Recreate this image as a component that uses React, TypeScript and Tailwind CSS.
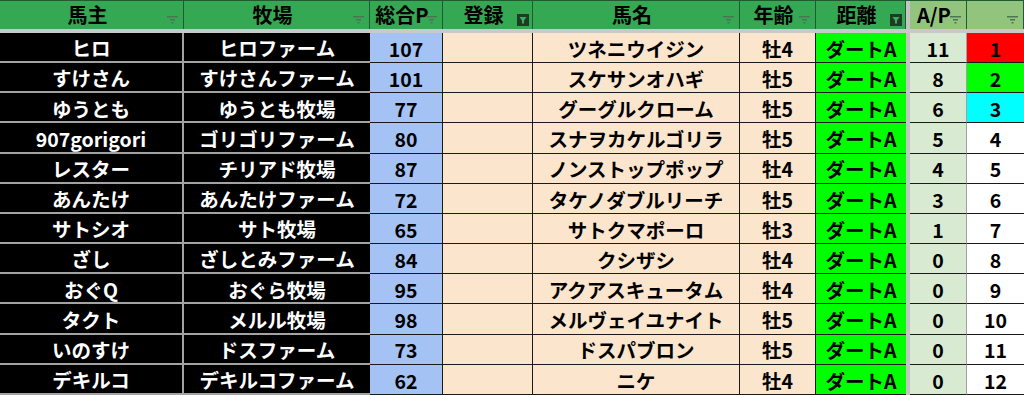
import React from 'react';

type Row = {
  owner: string;
  farm: string;
  total: number;
  horse: string;
  age: string;
  ap: number;
  rank: number;
};

const rows: Row[] = [
  { owner: 'ヒロ', farm: 'ヒロファーム', total: 107, horse: 'ツネニウイジン', age: '牡4', ap: 11, rank: 1 },
  { owner: 'すけさん', farm: 'すけさんファーム', total: 101, horse: 'スケサンオハギ', age: '牡5', ap: 8, rank: 2 },
  { owner: 'ゆうとも', farm: 'ゆうとも牧場', total: 77, horse: 'グーグルクローム', age: '牡5', ap: 6, rank: 3 },
  { owner: '907gorigori', farm: 'ゴリゴリファーム', total: 80, horse: 'スナヲカケルゴリラ', age: '牡5', ap: 5, rank: 4 },
  { owner: 'レスター', farm: 'チリアド牧場', total: 87, horse: 'ノンストップポップ', age: '牡4', ap: 4, rank: 5 },
  { owner: 'あんたけ', farm: 'あんたけファーム', total: 72, horse: 'タケノダブルリーチ', age: '牡5', ap: 3, rank: 6 },
  { owner: 'サトシオ', farm: 'サト牧場', total: 65, horse: 'サトクマポーロ', age: '牡3', ap: 1, rank: 7 },
  { owner: 'ざし', farm: 'ざしとみファーム', total: 84, horse: 'クシザシ', age: '牡4', ap: 0, rank: 8 },
  { owner: 'おぐQ', farm: 'おぐら牧場', total: 95, horse: 'アクアスキュータム', age: '牡4', ap: 0, rank: 9 },
  { owner: 'タクト', farm: 'メルル牧場', total: 98, horse: 'メルヴェイユナイト', age: '牡5', ap: 0, rank: 10 },
  { owner: 'いのすけ', farm: 'ドスファーム', total: 73, horse: 'ドスパブロン', age: '牡5', ap: 0, rank: 11 },
  { owner: 'デキルコ', farm: 'デキルコファーム', total: 62, horse: 'ニケ', age: '牡4', ap: 0, rank: 12 },
];

const grid = 'grid grid-cols-[184px_186px_73px_90px_207px_76px_90px_4px_57px_57px]';

function FilterLines() {
  return (
    <svg width="11" height="9" viewBox="0 0 11 9" className="absolute right-[5px] bottom-[4px]">
      <rect x="0" y="0" width="11" height="1.5" fill="#4a7656" />
      <rect x="3" y="3" width="5" height="1.5" fill="#4a7656" />
      <rect x="4.5" y="6" width="2" height="1.5" fill="#4a7656" />
    </svg>
  );
}

function FilterActive() {
  return (
    <svg width="12" height="12" viewBox="0 0 12 12" className="absolute right-[3px] bottom-[3px]">
      <rect x="0" y="0" width="12" height="12" fill="#1f3b28" />
      <path d="M2.5 3 H9.5 L7 6.5 V9.5 H5 V6.5 Z" fill="#3fae5c" />
    </svg>
  );
}

function Head({ label, icon, light }: { label: string; icon: 'lines' | 'active'; light?: boolean }) {
  return (
    <div
      className={`relative flex items-center justify-center border-r border-[#1d5c32] pr-2 text-[20px] font-bold text-black ${
        light ? 'bg-[#93c47d]' : 'bg-[#34a853]'
      }`}
    >
      <span className="leading-none">{label}</span>
      {icon === 'lines' ? <FilterLines /> : <FilterActive />}
    </div>
  );
}

const rankBg = (rank: number) => {
  if (rank === 1) return 'bg-[#ff0000]';
  if (rank === 2) return 'bg-[#00ff00]';
  if (rank === 3) return 'bg-[#00ffff]';
  return 'bg-white';
};

export default function App() {
  return (
    <div className="w-[1024px] h-[395px] overflow-hidden bg-white font-['Noto_Sans_CJK_JP',sans-serif]">
      <div className={`${grid} h-[29px] border-t border-[#1d5c32]`}>
        <Head label="馬主" icon="lines" />
        <Head label="牧場" icon="lines" />
        <Head label="総合P" icon="lines" />
        <Head label="登録" icon="active" />
        <Head label="馬名" icon="lines" />
        <Head label="年齢" icon="lines" />
        <Head label="距離" icon="active" />
        <div className="bg-[#c4c4c4]" />
        <Head label="A/P" icon="lines" light />
        <Head label="" icon="lines" light />
      </div>
      <div className="h-[4px] bg-[#c9c9c9]" />
      {rows.map((r) => (
        <div key={r.owner} className={`${grid} h-[30.16px] text-[19.5px] font-bold leading-none`}>
          <div className="flex items-center justify-center pt-[2px] bg-black text-white border-b-2 border-r-2 border-[#a3a3a3]">
            {r.owner}
          </div>
          <div className="flex items-center justify-center pt-[2px] bg-black text-white border-b-2 border-[#a3a3a3]">
            {r.farm}
          </div>
          <div className="flex items-center justify-center pt-[2px] bg-[#a4c2f4] text-black border-b border-r border-[#1a1a1a]">
            {r.total}
          </div>
          <div className="bg-[#fce5cd] border-b border-r border-[#1a1a1a]" />
          <div className="flex items-center justify-center pt-[2px] bg-[#fce5cd] text-black border-b border-r border-[#1a1a1a]">
            {r.horse}
          </div>
          <div className="flex items-center justify-center pt-[2px] bg-[#fce5cd] text-black border-b border-r border-[#1a1a1a]">
            {r.age}
          </div>
          <div className="flex items-center justify-center pt-[2px] bg-[#00ff00] text-black border-b border-[#1a1a1a]">
            ダートA
          </div>
          <div className="bg-[#c4c4c4]" />
          <div className="flex items-center justify-center pt-[2px] bg-[#d9ead3] text-black border-b border-[#1a1a1a] border-r border-r-[#a0a0a0]">
            {r.ap}
          </div>
          <div className={`flex items-center justify-center pt-[2px] text-black border-b border-[#1a1a1a] ${rankBg(r.rank)}`}>
            {r.rank}
          </div>
        </div>
      ))}
    </div>
  );
}
